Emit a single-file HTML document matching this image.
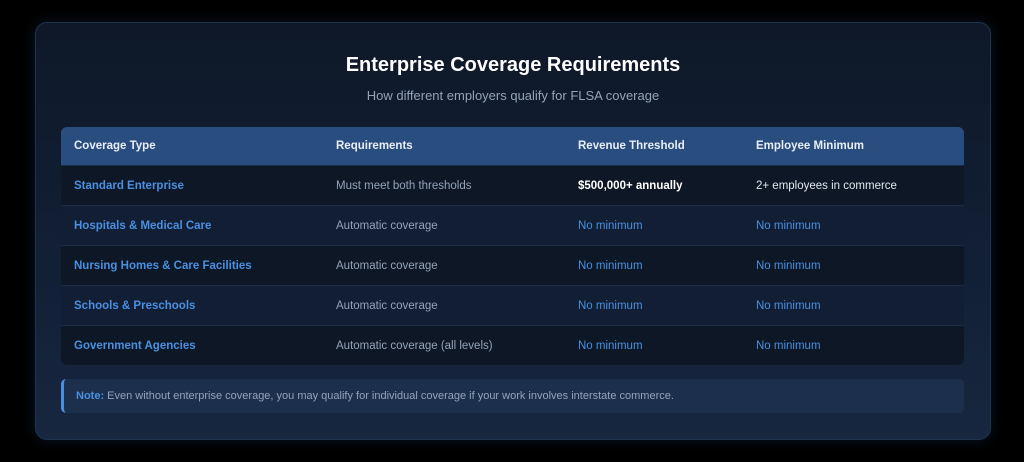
<!DOCTYPE html>
<html><head><style>
body{margin:0;width:1024px;height:462px;background:#000;font-family:"Liberation Sans",sans-serif;overflow:hidden;position:relative}
.card{position:absolute;left:35px;top:22px;width:954px;height:416px;border-radius:12px;background:linear-gradient(180deg,#0e1828 0%,#122036 60%,#17273f 100%);border:1px solid #1d3350;box-shadow:0 0 14px rgba(40,90,150,.25)}
h1{position:absolute;left:0;right:0;top:31px;margin:0;text-align:center;color:#fff;font-size:20px;font-weight:bold}
.sub{position:absolute;left:0;right:0;top:65px;text-align:center;color:#94a3b8;font-size:13px}
table{position:absolute;left:25px;top:104px;width:903px;border-collapse:collapse;border-radius:6px;overflow:hidden;font-size:11.5px}
th{background:#2a4d7f;color:#e8eef6;text-align:left;font-weight:bold;height:38px;padding:0 0 0 13px}
td{height:39px;padding:0 0 0 13px;color:#94a3b8;border-top:1px solid #1b2d45}
tr:nth-child(even) td{background:#0d1725}
tr:nth-child(odd) td{background:#111e33}
td.t{color:#4a90e2;font-weight:bold}
td.b{color:#4a90e2}
.note{position:absolute;left:25px;top:356px;width:888px;height:34px;background:#1c2f4d;border-left:3px solid #4a90e2;border-radius:5px;padding-left:12px;line-height:34px;font-size:11px;color:#94a3b8}
.note b{color:#4a90e2}
</style></head><body>
<div class="card">
<h1>Enterprise Coverage Requirements</h1>
<div class="sub">How different employers qualify for FLSA coverage</div>
<table>
<tr><th style="width:249px">Coverage Type</th><th style="width:229px">Requirements</th><th style="width:165px">Revenue Threshold</th><th>Employee Minimum</th></tr>
<tr><td class="t">Standard Enterprise</td><td>Must meet both thresholds</td><td style="color:#fff;font-weight:bold">$500,000+ annually</td><td style="color:#e2e8f0">2+ employees in commerce</td></tr>
<tr><td class="t">Hospitals &amp; Medical Care</td><td>Automatic coverage</td><td class="b">No minimum</td><td class="b">No minimum</td></tr>
<tr><td class="t">Nursing Homes &amp; Care Facilities</td><td>Automatic coverage</td><td class="b">No minimum</td><td class="b">No minimum</td></tr>
<tr><td class="t">Schools &amp; Preschools</td><td>Automatic coverage</td><td class="b">No minimum</td><td class="b">No minimum</td></tr>
<tr><td class="t">Government Agencies</td><td>Automatic coverage (all levels)</td><td class="b">No minimum</td><td class="b">No minimum</td></tr>
</table>
<div class="note"><b>Note:</b> Even without enterprise coverage, you may qualify for individual coverage if your work involves interstate commerce.</div>
</div>
</body></html>
